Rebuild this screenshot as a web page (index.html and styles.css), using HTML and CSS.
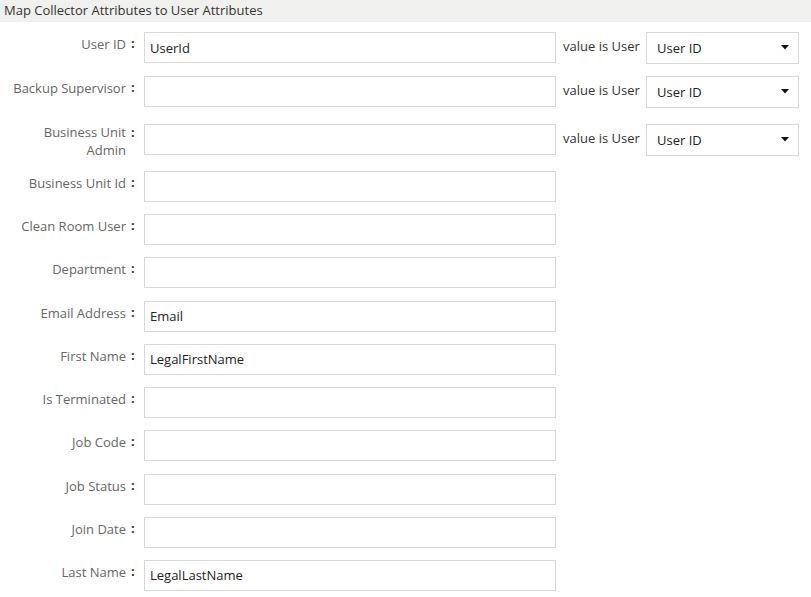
FILE: index.html
```html
<!DOCTYPE html>
<html>
<head>
<meta charset="utf-8">
<link rel="stylesheet" href="styles.css">
</head>
<body>
<div class="header">Map Collector Attributes to User Attributes</div>
<div class="form">
  <div class="row">
    <div class="lbl">User ID</div><span class="colon">:</span>
    <input class="field" value="UserId">
    <span class="note">value is User</span>
    <div class="select"><span>User ID</span><svg width="8" height="5" viewBox="0 0 8 5"><path d="M0 0H8L4 4.5Z" fill="#111"/></svg></div>
  </div>
  <div class="row r2">
    <div class="lbl">Backup Supervisor</div><span class="colon">:</span>
    <input class="field" value="">
    <span class="note">value is User</span>
    <div class="select"><span>User ID</span><svg width="8" height="5" viewBox="0 0 8 5"><path d="M0 0H8L4 4.5Z" fill="#111"/></svg></div>
  </div>
  <div class="row r3">
    <div class="lbl two">Business Unit Admin</div><span class="colon two">:</span>
    <input class="field" value="">
    <span class="note">value is User</span>
    <div class="select"><span>User ID</span><svg width="8" height="5" viewBox="0 0 8 5"><path d="M0 0H8L4 4.5Z" fill="#111"/></svg></div>
  </div>
  <div class="row r4">
    <div class="lbl">Business Unit Id</div><span class="colon">:</span>
    <input class="field" value="">
  </div>
  <div class="row">
    <div class="lbl">Clean Room User</div><span class="colon">:</span>
    <input class="field" value="">
  </div>
  <div class="row">
    <div class="lbl">Department</div><span class="colon">:</span>
    <input class="field" value="">
  </div>
  <div class="row">
    <div class="lbl">Email Address</div><span class="colon">:</span>
    <input class="field" value="Email">
  </div>
  <div class="row">
    <div class="lbl">First Name</div><span class="colon">:</span>
    <input class="field" value="LegalFirstName">
  </div>
  <div class="row">
    <div class="lbl">Is Terminated</div><span class="colon">:</span>
    <input class="field" value="">
  </div>
  <div class="row">
    <div class="lbl">Job Code</div><span class="colon">:</span>
    <input class="field" value="">
  </div>
  <div class="row">
    <div class="lbl">Job Status</div><span class="colon">:</span>
    <input class="field" value="">
  </div>
  <div class="row">
    <div class="lbl">Join Date</div><span class="colon">:</span>
    <input class="field" value="">
  </div>
  <div class="row">
    <div class="lbl">Last Name</div><span class="colon">:</span>
    <input class="field" value="LegalLastName">
  </div>
</div>
</body>
</html>
```
FILE: styles.css
```css
html, body {
  margin: 0;
  padding: 0;
  background: #ffffff;
}
body {
  font-family: "Open Sans", "Noto Sans", sans-serif;
  font-size: 13px;
  color: #333;
}
.header {
  height: 22px;
  box-sizing: border-box;
  padding: 1px 0 0 4px;
  line-height: 18px;
  background: #f0f0ee;
  color: #333;
}
.form {
  padding: 10px 0 0 5px;
}
.row {
  display: flex;
  align-items: flex-start;
  height: 31px;
}
.row + .row {
  margin-top: 12.22px;
}
.row.r2 { margin-top: 13px; }
.row.r3 { margin-top: 17px; }
.row.r4 { margin-top: 16px; }
.lbl {
  width: 121px;
  flex: none;
  text-align: right;
  color: #666;
  line-height: 18px;
  padding-top: 3px;
}
.lbl.two {
  padding-top: 0;
  margin-top: -1px;
}
.colon {
  flex: none;
  width: 13px;
  margin-left: 5px;
  color: #333;
  font-weight: bold;
  line-height: 18px;
  padding-top: 2px;
}
.colon.two {
  padding-top: 0;
  margin-top: -1px;
}
.field {
  flex: none;
  width: 412px;
  height: 31px;
  box-sizing: border-box;
  margin: 0;
  border: 1px solid #d8d8d8;
  border-radius: 0;
  padding: 0 5px;
  font-family: "Open Sans", "Noto Sans", sans-serif;
  font-size: 13px;
  color: #222;
  background: #fff;
  outline: none;
}
.note {
  flex: none;
  width: 83px;
  margin-left: 7px;
  padding-top: 5px;
  line-height: 18px;
  white-space: nowrap;
  color: #333;
}
.select {
  flex: none;
  width: 153px;
  height: 32px;
  box-sizing: border-box;
  border: 1px solid #d8d8d8;
  display: flex;
  align-items: center;
  justify-content: space-between;
  padding: 0 9px 0 10px;
  color: #222;
  line-height: 18px;
}
.select svg {
  display: block;
  margin-top: -1px;
}
```
